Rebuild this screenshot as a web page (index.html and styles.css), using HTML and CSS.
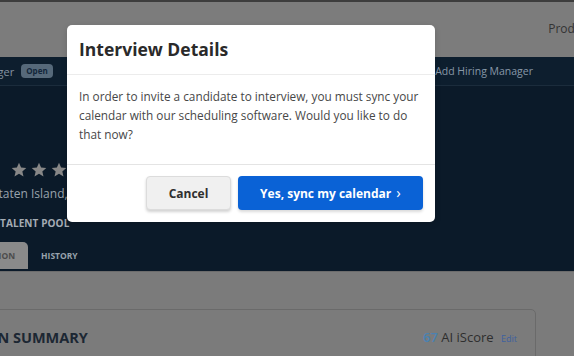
FILE: index.html
```html
<!DOCTYPE html>
<html>
<head>
<meta charset="utf-8">
<link rel="stylesheet" href="styles.css">
</head>
<body>
<div class="page">
  <header class="topbar">
    <span class="topnav">Products</span>
  </header>
  <div class="jobbar">
    <div class="jobbar-left">
      <span class="mgr">Hiring Manager</span>
      <span class="badge">Open</span>
    </div>
    <span class="add-mgr">Add Hiring Manager</span>
  </div>
  <section class="hero">
    <div class="stars">
      <svg viewBox="1 1.5 22 21" class="star"><path d="M12 2l2.9 6.6 7.1.7-5.4 4.8 1.6 7L12 17.3 5.8 21.1l1.6-7L2 9.3l7.1-.7z"/></svg>
      <svg viewBox="1 1.5 22 21" class="star"><path d="M12 2l2.9 6.6 7.1.7-5.4 4.8 1.6 7L12 17.3 5.8 21.1l1.6-7L2 9.3l7.1-.7z"/></svg>
      <svg viewBox="1 1.5 22 21" class="star"><path d="M12 2l2.9 6.6 7.1.7-5.4 4.8 1.6 7L12 17.3 5.8 21.1l1.6-7L2 9.3l7.1-.7z"/></svg>
    </div>
    <div class="location">Staten Island, NY</div>
    <div class="pool">TALENT POOL</div>
    <nav class="tabs">
      <span class="tab active">INFORMATION</span>
      <span class="tab">HISTORY</span>
    </nav>
  </section>
  <main class="content">
    <div class="card">
      <h2 class="card-title">EVALUATION SUMMARY</h2>
      <div class="score"><span class="num">67</span> AI iScore <span class="edit">Edit</span></div>
    </div>
  </main>
</div>

<div class="modal">
  <div class="modal-head">Interview Details</div>
  <div class="modal-body">In order to invite a candidate to interview, you must sync your calendar with our scheduling software. Would you like to do that now?</div>
  <div class="modal-foot">
    <button class="btn btn-cancel">Cancel</button>
    <button class="btn btn-primary">Yes, sync my calendar <span class="chev">&#x203A;</span></button>
  </div>
</div>
</body>
</html>
```

FILE: styles.css
```css
* { box-sizing: border-box; }
html, body { margin: 0; padding: 0; }
body {
  width: 574px;
  height: 356px;
  overflow: hidden;
  font-family: "Open Sans", "Liberation Sans", sans-serif;
  background: #7b7b7b;
  position: relative;
}
.page { display: flex; flex-direction: column; height: 356px; }
.page > * { flex-shrink: 0; }

.topbar {
  height: 57px;
  border-top: 2px solid #3d3d3d;
  background: #7c7c7c;
  display: flex;
  justify-content: flex-end;
  align-items: center;
  padding-bottom: 3px;
}
.topnav {
  font-size: 12px;
  color: #333;
  margin-right: -24px;
  white-space: nowrap;
}

.jobbar {
  height: 29px;
  background: #0d1e2e;
  border-bottom: 1px solid #1b2c3c;
  display: flex;
  align-items: center;
  justify-content: space-between;
  padding-right: 41px;
}
.jobbar-left { display: flex; align-items: center; gap: 7px; margin-left: -65px; }
.mgr { font-size: 11px; color: #8593a1; }
.badge {
  font-size: 8px;
  font-weight: 700;
  color: #12263a;
  background: #56697a;
  border-radius: 4px;
  padding: 1px 5px 2px;
}
.add-mgr { font-size: 10.5px; color: #8898a8; }

.hero {
  height: 185px;
  background: #0b1a29;
  display: flex;
  flex-direction: column;
  padding-top: 76px;
}
.stars { display: flex; gap: 4px; margin-left: 11px; }
.star { width: 16px; height: 16px; fill: #878787; }
.location {
  margin-top: 7px;
  margin-left: -8px;
  font-size: 12px;
  color: #9aa3ac;
  white-space: nowrap;
}
.pool {
  margin-top: 14px;
  font-size: 10px;
  font-weight: 700;
  color: #a5acb4;
  letter-spacing: 0.1px;
}
.tabs { margin-top: 12px; display: flex; align-items: stretch; height: 27px; margin-left: -60px; }
.tab {
  font-size: 8.5px;
  font-weight: 700;
  color: #98a2ac;
  display: flex;
  align-items: center;
  padding: 0 13px;
}
.tab.active {
  background: #8a8a8a;
  color: #4c4c4c;
  border-radius: 0 5px 0 0;
}

.content {
  flex: 1;
  background: #7b7b7b;
  border-top: 1px solid #6c6c6c;
  padding-top: 37px;
}
.card {
  width: 537px;
  margin-left: -1px;
  height: 60px;
  border: 1px solid #6a6a6a;
  border-radius: 0 5px 0 0;
  display: flex;
  justify-content: space-between;
  align-items: flex-start;
  padding: 18px 18px 0 0;
}
.card-title {
  margin: 0 0 0 -84px;
  font-size: 14.5px;
  font-weight: 700;
  color: #1c2733;
}
.score { font-size: 13px; color: #2e2e2e; margin-top: 0; }
.score .num { color: #4a82b2; font-weight: 600; }
.score .edit { font-size: 9px; color: #3d60a0; margin-left: 4px; }

.modal {
  position: absolute;
  left: 67px;
  top: 25px;
  width: 368px;
  height: 197px;
  background: #fff;
  border-radius: 5px;
  display: flex;
  flex-direction: column;
  box-shadow: 0 2px 6px rgba(0,0,0,0.15);
}
.modal-head {
  height: 50px;
  padding: 12px 12px 0;
  font-size: 17.5px;
  font-weight: 700;
  color: #2a2a2a;
  border-bottom: 1px solid #ececec;
}
.modal-body {
  height: 90px;
  padding: 12px 12px 0;
  font-size: 11.8px;
  line-height: 19px;
  color: #474747;
  border-bottom: 1px solid #e4e4e4;
}
.modal-foot {
  flex: 1;
  display: flex;
  justify-content: flex-end;
  align-items: flex-start;
  gap: 7px;
  padding: 11px 12px 0;
}
.btn {
  height: 34px;
  border-radius: 4px;
  font-family: inherit;
  font-size: 12px;
  font-weight: 700;
  cursor: pointer;
}
.btn-cancel {
  width: 85px;
  background: #f0f0f0;
  border: 1px solid #dcdcdc;
  color: #2f2f2f;
  box-shadow: 0 2px 3px rgba(0,0,0,0.18);
}
.btn-primary {
  width: 185px;
  background: #0a62d6;
  border: none;
  color: #fff;
  box-shadow: 0 2px 3px rgba(0,0,0,0.15);
}
.chev { font-size: 15px; font-weight: 400; line-height: 1; margin-left: 2px; }
```
